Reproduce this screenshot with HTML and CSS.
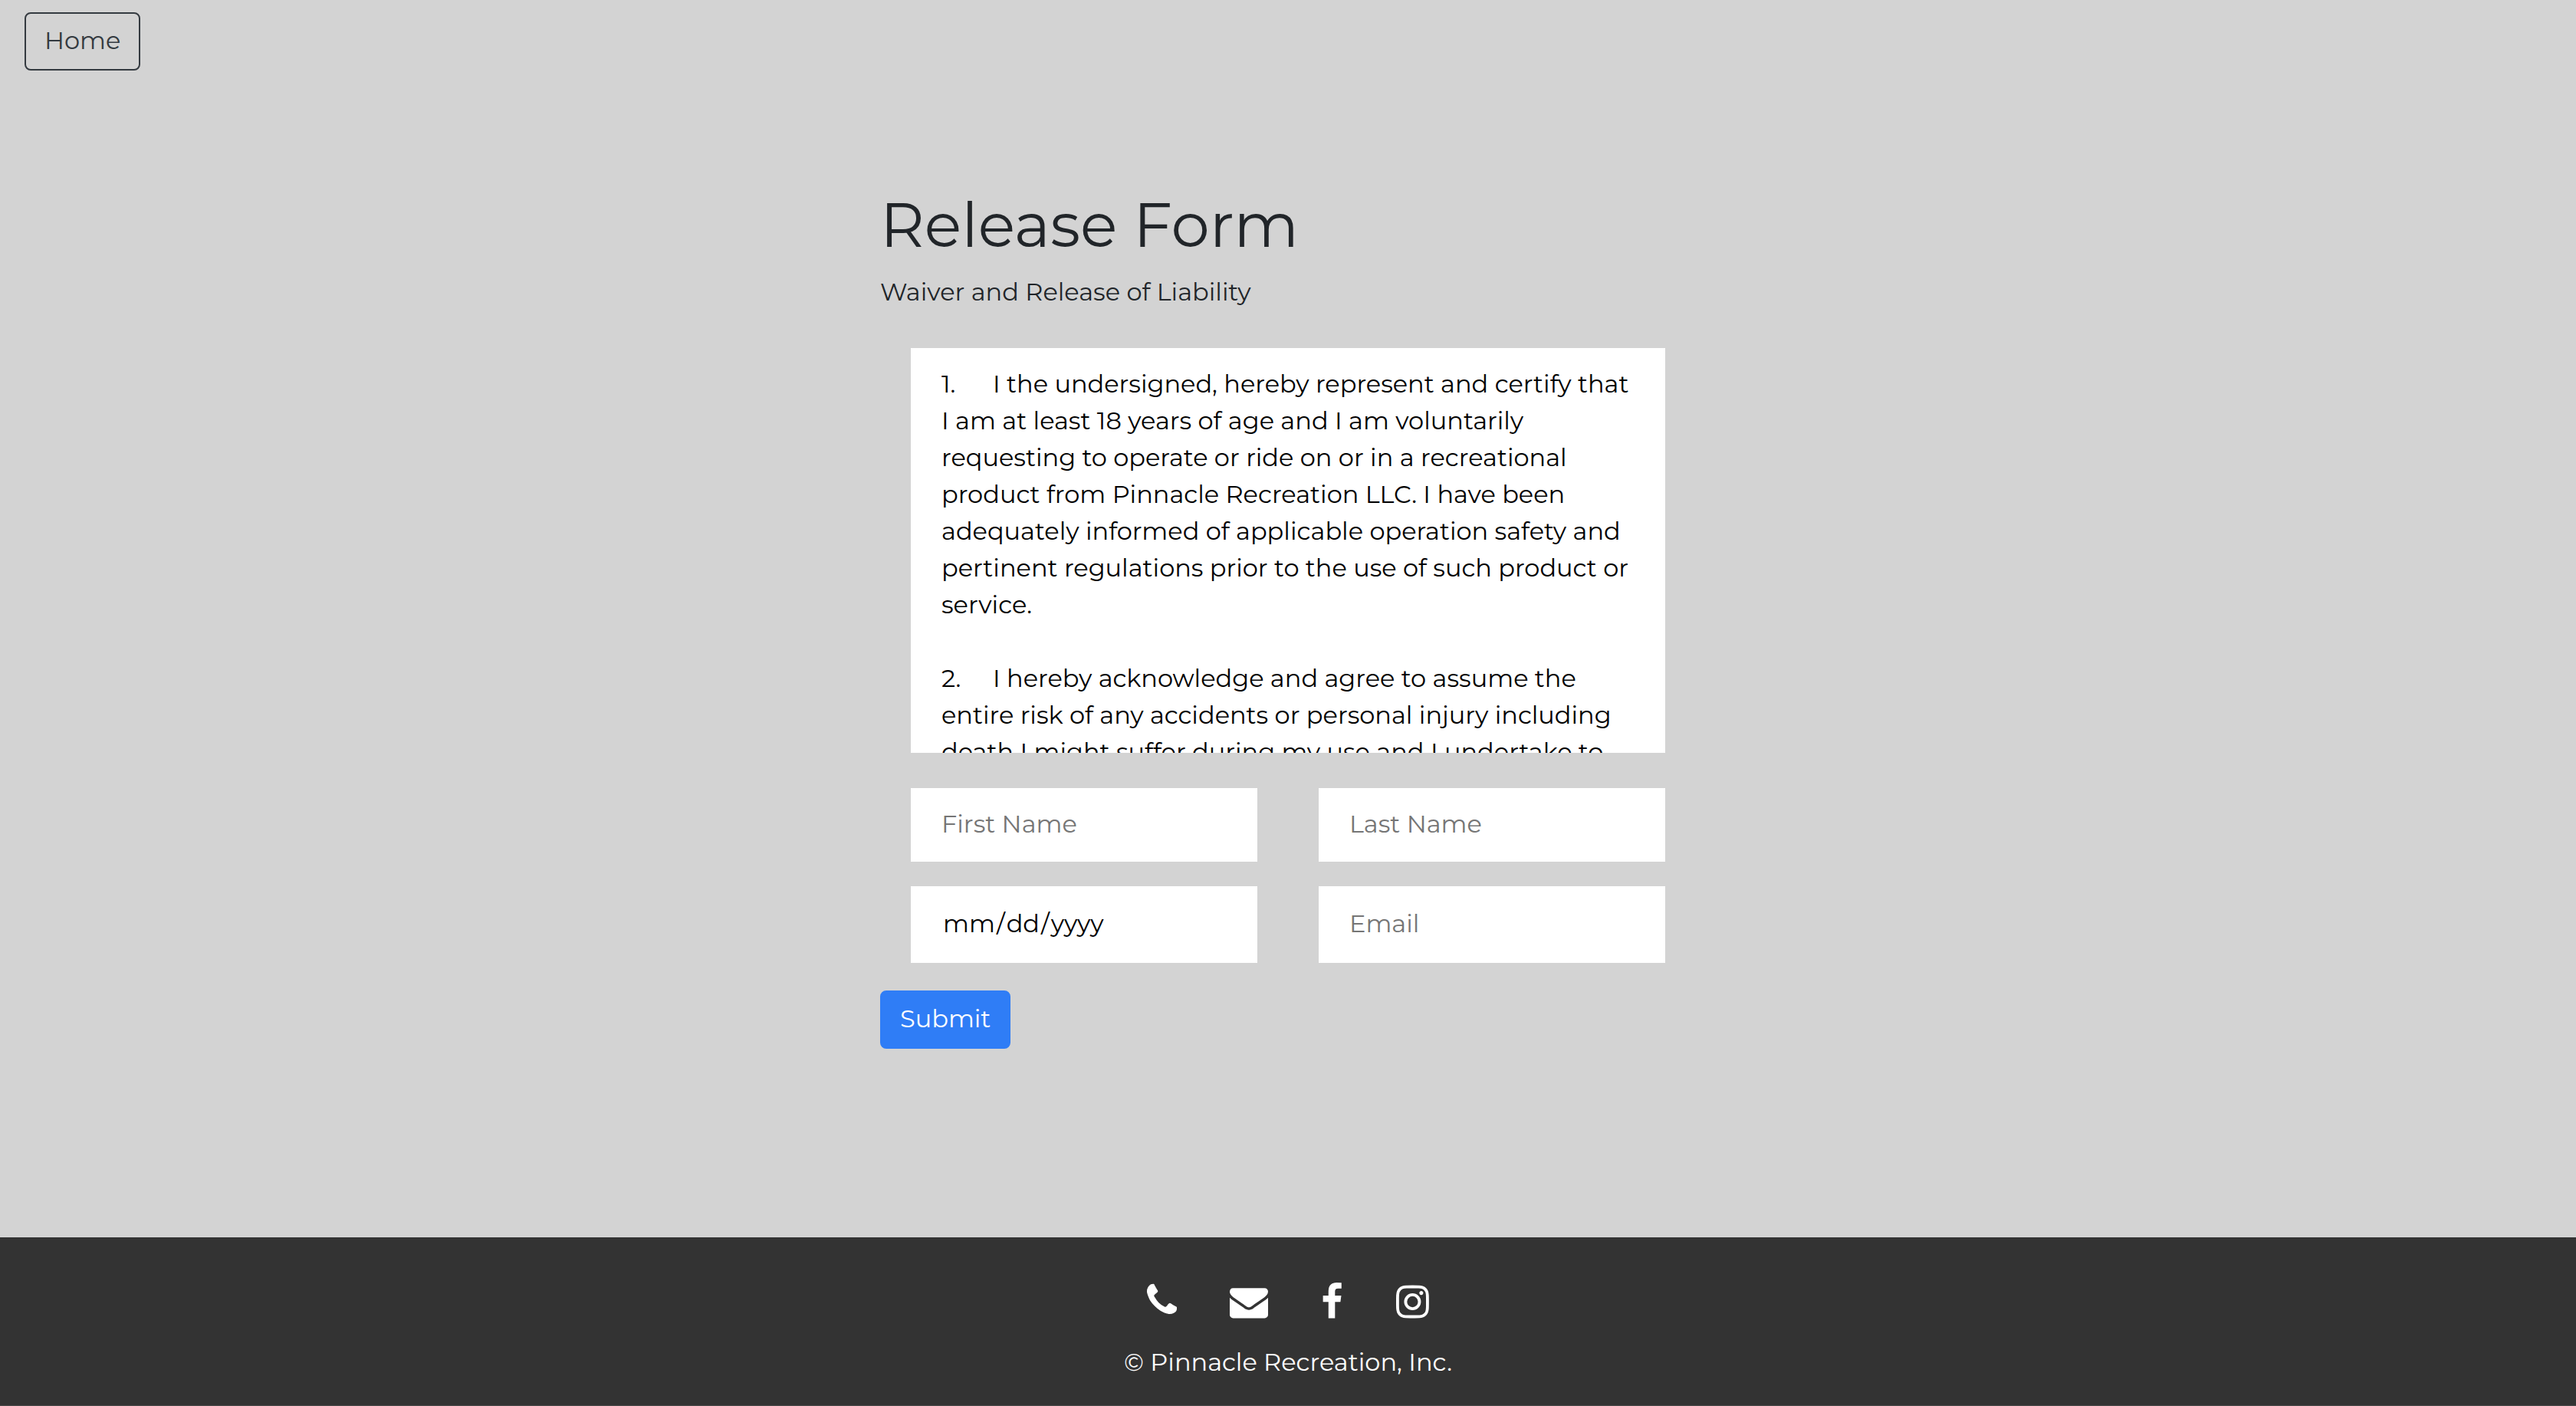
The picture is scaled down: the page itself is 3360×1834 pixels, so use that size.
FILE: index.html
```html
<!DOCTYPE html>
<html lang="en-US">
<head>
<meta charset="utf-8">
<meta name="viewport" content="width=device-width, initial-scale=1">
<title>Release Form</title>
<link rel="stylesheet" href="styles.css">
</head>
<body>
<nav class="nav">
  <a class="btn btn-outline" href="#home">Home</a>
</nav>
<main class="main">
  <form class="form">
    <h1 class="title">Release Form</h1>
    <p class="subtitle" id="waiver-label">Waiver and Release of Liability</p>
    <div class="fields">
      <textarea class="field waiver" aria-labelledby="waiver-label" readonly>1.	I the undersigned, hereby represent and certify that I am at least 18 years of age and I am voluntarily requesting to operate or ride on or in a recreational product from Pinnacle Recreation LLC. I have been adequately informed of applicable operation safety and pertinent regulations prior to the use of such product or service.

2.	I hereby acknowledge and agree to assume the entire risk of any accidents or personal injury including death I might suffer during my use and I undertake to</textarea>
      <input class="field" type="text" placeholder="First Name" aria-label="First Name">
      <input class="field" type="text" placeholder="Last Name" aria-label="Last Name">
      <input class="field tall" type="date" aria-label="Date">
      <input class="field tall" type="email" placeholder="Email" aria-label="Email">
    </div>
    <button class="btn btn-primary" type="submit">Submit</button>
  </form>
</main>
<footer class="footer">
  <div class="social">
    <a href="#phone" aria-label="Phone"><svg viewBox="192 64 1408 1792"><path d="M1600 1240q0 27-10 70.500t-21 68.500q-21 50-122 106-94 51-186 51-27 0-53-3.500t-57.500-12.500-47-14.500-55.500-20.500-49-18q-98-35-175-83-127-79-264-216t-216-264q-48-77-83-175-3-9-18-49t-20.500-55.500-14.500-47-12.500-57.500-3.500-53q0-92 51-186 56-101 106-122 25-11 68.500-21t70.500-10q14 0 21 3 18 6 53 76 11 19 30 54t35 63.500 31 53.500q3 4 17.500 25t21.500 35.500 7 28.500q0 20-28.500 50t-62 55-62 53-28.500 46q0 9 5 22.500t8.500 20.500 14 24 11.500 19q76 137 174 235t235 174q2 1 19 11.500t24 14 20.500 8.500 22.500 5q18 0 46-28.500t53-62 55-62 50-28.500q14 0 28.500 7t35.500 21.500 25 17.500q25 15 53.500 31t63.500 35 54 30q70 35 76 53 3 7 3 21z"/></svg></a>
    <a href="#mail" aria-label="Email us"><svg viewBox="0 0 1792 1792"><path d="M1792 710v794q0 66-47 113t-113 47h-1472q-66 0-113-47t-47-113v-794q44 49 101 87 362 246 497 345 57 42 92.500 65.500t94.500 48 110 24.500h2q51 0 110-24.500t94.500-48 92.500-65.500q170-123 498-345 57-39 100-87zm0-294q0 79-49 151t-122 123q-376 261-468 325-10 7-42.500 31t-54 38.500-52 32.500-57.500 27-50 9h-2q-23 0-50-9t-57.500-27-52-32.500-54-38.500-42.500-31q-91-64-262-182.500t-205-142.500q-62-42-117-115.500t-55-136.500q0-78 41.500-130t118.500-52h1472q65 0 112.500 47t47.500 113z"/></svg></a>
    <a href="#facebook" aria-label="Facebook"><svg viewBox="384 0 1024 1792"><path d="M1343 12v264h-157q-86 0-116 36t-30 108v189h293l-39 296h-254v759h-306v-759h-255v-296h255v-218q0-186 104-288.500t277-102.500q147 0 228 12z"/></svg></a>
    <a href="#instagram" aria-label="Instagram"><svg viewBox="128 0 1536 1792"><path d="M1152 896q0-106-75-181t-181-75-181 75-75 181 75 181 181 75 181-75 75-181zm138 0q0 164-115 279t-279 115-279-115-115-279 115-279 279-115 279 115 115 279zm108-410q0 38-27 65t-65 27-65-27-27-65 27-65 65-27 65 27 27 65zm-502-220q-7 0-76.500-.5t-105.500 0-96.500 3-103 10-71.500 18.500q-50 20-88 58t-58 88q-11 29-18.500 71.500t-10 103-3 96.500 0 105.500.5 76.500-.5 76.500 0 105.500 3 96.500 10 103 18.500 71.500q20 50 58 88t88 58q29 11 71.500 18.500t103 10 96.500 3 105.500 0 76.500-.5 76.500.5 105.500 0 96.500-3 103-10 71.500-18.500q50-20 88-58t58-88q11-29 18.500-71.500t10-103 3-96.500 0-105.500-.5-76.500.5-76.500 0-105.500-3-96.500-10-103-18.500-71.500q-20-50-58-88t-88-58q-29-11-71.500-18.500t-103-10-96.500-3-105.500 0-76.500.5zm768 630q0 229-5 317-10 208-124 322t-322 124q-88 5-317 5t-317-5q-208-10-322-124t-124-322q-5-88-5-317t5-317q10-208 124-322t322-124q88-5 317-5t317 5q208 10 322 124t124 322q5 88 5 317z"/></svg></a>
  </div>
  <p class="copyright">© Pinnacle Recreation, Inc.</p>
</footer>
</body>
</html>
```
FILE: styles.css
```css
*, *::before, *::after { box-sizing: border-box; }

body {
  display: flex;
  flex-direction: column;
  min-height: 100vh;
  margin: 0;
  background: #d3d3d3;
  color: #212529;
  font-family: Montserrat, Inter, "Open Sans", sans-serif;
  font-size: 32px;
  line-height: 48px;
}

.nav {
  display: flex;
  padding: 16px 32px;
}

.btn {
  padding: 11px 24px 13px;
  border: 2px solid;
  border-radius: 8px;
  font: inherit;
  text-decoration: none;
}

.btn-outline {
  border-color: #343a40;
  color: #343a40;
}

.btn-primary {
  margin-top: 36px;
  border-color: #2f7df6;
  background: #2f7df6;
  color: #fff;
}

.main {
  flex: 1;
  padding: 138px 32px 64px;
}

.form {
  width: 100%;
  max-width: 1064px;
  margin: 0 auto;
}

.title {
  margin: 0 0 15px;
  font-size: 80px;
  font-weight: 400;
  line-height: 96px;
}

.subtitle { margin: 0; }

.fields {
  display: grid;
  grid-template-columns: 1fr 1fr;
  gap: 32px 80px;
  padding: 49px 40px 0;
}

.field {
  display: block;
  width: 100%;
  min-width: 0;
  height: 96px;
  margin: 0;
  padding: 0 40px 3px;
  border: 0;
  border-radius: 0;
  background: #fff;
  color: #000;
  font: inherit;
}

.field::placeholder {
  color: #757575;
  opacity: 1;
}

.field::-webkit-calendar-picker-indicator { display: none; }

.field::-webkit-datetime-edit-month-field,
.field::-webkit-datetime-edit-day-field,
.field::-webkit-datetime-edit-year-field {
  padding: 0 2px;
}

.tall { height: 100px; }

.waiver {
  grid-column: 1 / -1;
  height: 528px;
  margin-bottom: 14px;
  padding: 23px 40px;
  overflow: auto;
  resize: none;
  scrollbar-width: none;
  tab-size: 67px;
}

.footer {
  padding: 59px 32px 32px;
  border-bottom: 1px solid #4a4a4a;
  background: #333;
  color: #fff;
}

.social {
  display: flex;
  justify-content: center;
  gap: 69px;
}

.social a { color: inherit; }

.social svg {
  display: block;
  height: 50px;
  fill: currentColor;
}

.copyright {
  margin: 30px 0 0;
  text-align: center;
}
```
